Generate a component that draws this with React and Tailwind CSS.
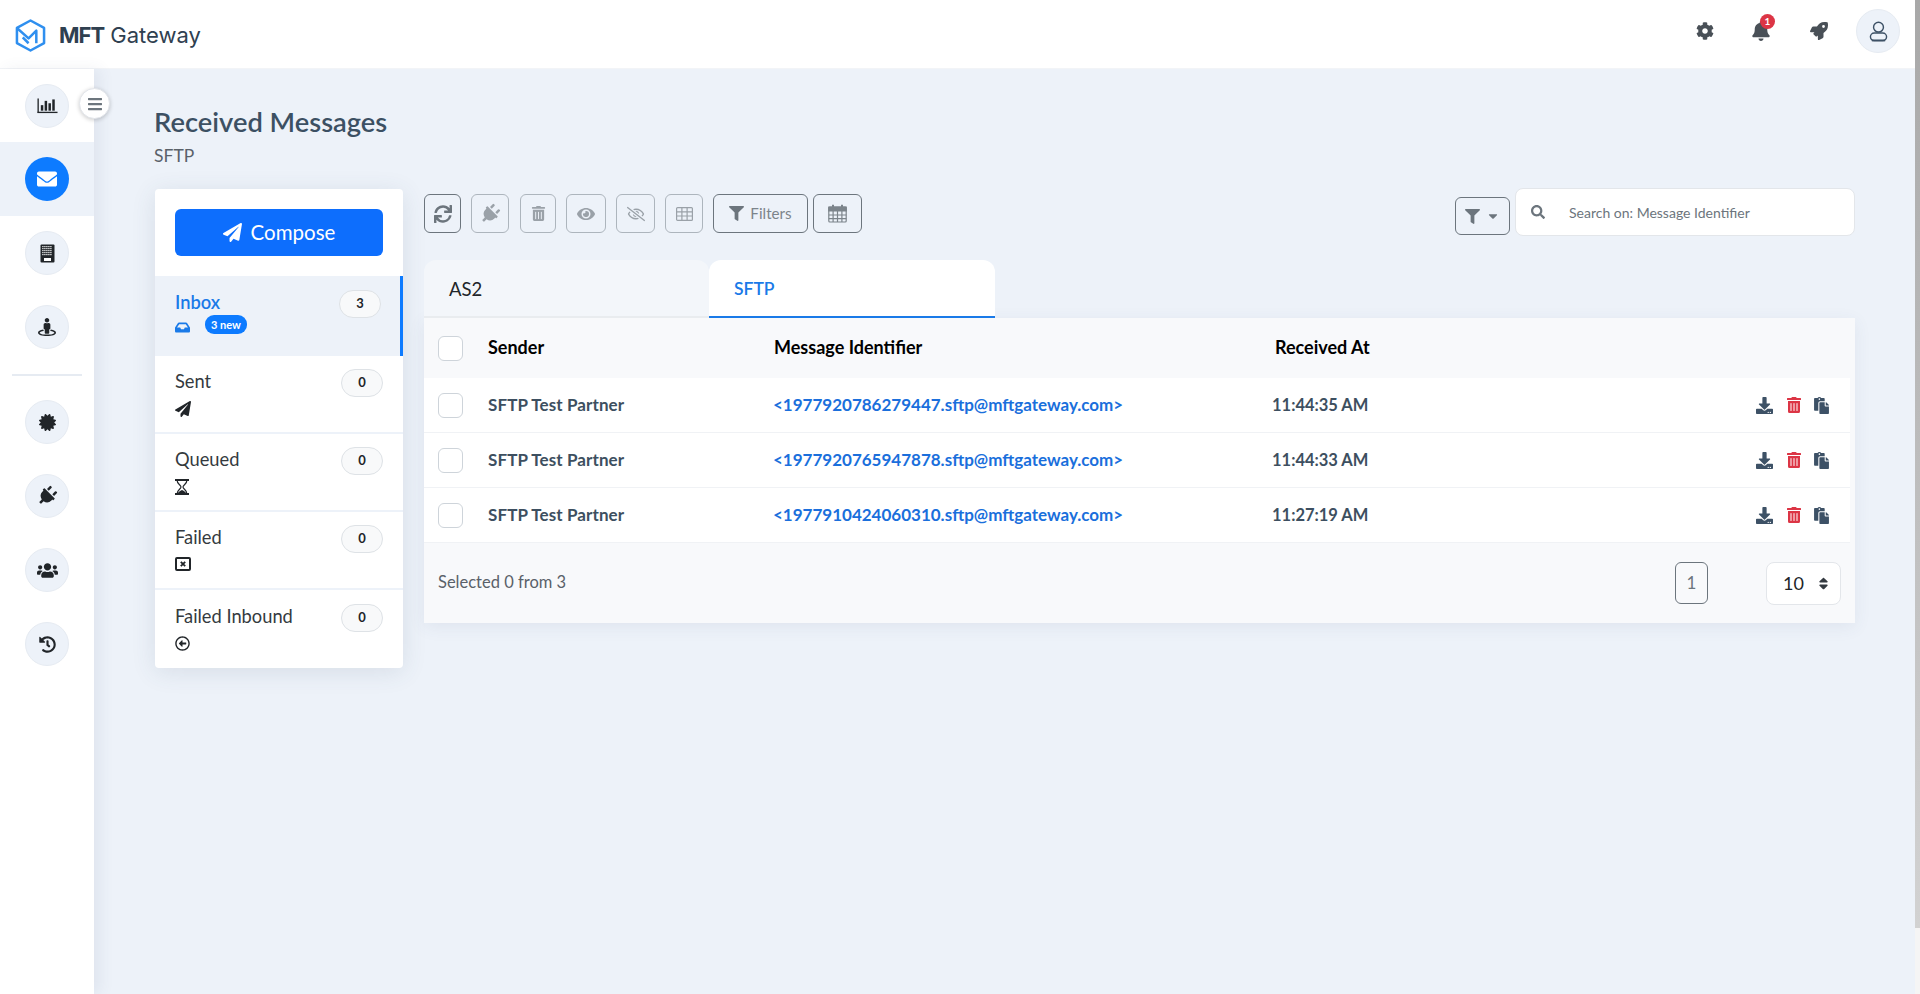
import React from "react";
import {
  FaEnvelope, FaStreetView, FaCertificate, FaPlug, FaUsers, FaHistory,
  FaCog, FaBell, FaRocket, FaPaperPlane, FaInbox,
  FaRegArrowAltCircleLeft, FaSync, FaTrashAlt, FaEye, FaRegEyeSlash, FaFilter,
  FaSearch, FaCaretDown, FaDownload, FaPaste, FaSort, FaBars,
} from "react-icons/fa";

function Logo() {
  return (
    <svg viewBox="0 0 32 34" className="w-[31px] h-[33px]" fill="none" stroke="#2f8fef" strokeWidth="2.6" strokeLinejoin="round">
      <path d="M16 1.5 30 9.2v15.6L16 32.5 2 24.8V9.2Z" />
      <path d="M2 9.2 14 20l8-8v13" />
      <path d="M8 19l6 6" />
    </svg>
  );
}

function ChartIcon({ size = 21 }) {
  return (
    <svg viewBox="0 0 22 16" width={size} height={size * 16 / 22} fill="#212529">
      <rect x="0.5" y="0.5" width="1.4" height="15" />
      <rect x="0.5" y="14.4" width="21" height="1.4" />
      <rect x="4" y="7.5" width="2.6" height="5.8" />
      <rect x="8" y="3" width="2.6" height="10.3" />
      <rect x="12" y="5.5" width="2.6" height="7.8" />
      <rect x="16" y="1.5" width="2.6" height="11.8" />
    </svg>
  );
}

function BuildingIcon() {
  const cells = [];
  for (let r = 0; r < 5; r++) {
    for (let c = 0; c < 5; c++) {
      cells.push(<rect key={r + "-" + c} x={2.3 + c * 2} y={2 + r * 2} width="1.2" height="1.2" fill="#fff" />);
    }
  }
  return (
    <svg viewBox="0 0 15 19" width="15" height="19">
      <rect x="0.5" y="0.5" width="14" height="18" rx="1" fill="#212529" />
      {cells}
      <rect x="4" y="14" width="7" height="3" fill="#fff" />
    </svg>
  );
}

function UserIcon() {
  return (
    <svg viewBox="0 0 20 22" width="19" height="21" fill="none" stroke="#3d5166" strokeWidth="1.5">
      <circle cx="10" cy="6.4" r="5.2" />
      <rect x="1.5" y="12.6" width="17" height="8" rx="4" />
      <path d="M3 20.4h14" strokeWidth="2" />
    </svg>
  );
}

function HourglassIcon() {
  return (
    <svg viewBox="0 0 14 16" width="14" height="16" fill="none" stroke="#212529">
      <path d="M0 1h14M0 15h14" strokeWidth="2" />
      <path d="M2 1c0 4 4 5 4 7s-4 3-4 7M12 1c0 4-4 5-4 7s4 3 4 7" strokeWidth="1.2" />
      <path d="M2.4 15c.4-2 2.6-3 4.6-4 2 1 4.2 2 4.6 4Z" fill="#212529" stroke="none" />
    </svg>
  );
}

function FailedIcon() {
  return (
    <svg viewBox="0 0 16 14" width="16" height="14" fill="none" stroke="#212529">
      <rect x="1" y="1" width="14" height="12" strokeWidth="2" rx="1" />
      <path d="M5.8 4.8l4.4 4.4M10.2 4.8l-4.4 4.4" strokeWidth="1.8" />
    </svg>
  );
}

function GridIcon() {
  return (
    <svg viewBox="0 0 17 14" width="17" height="14" fill="none" stroke="#9aa1a8" strokeWidth="1.2">
      <rect x="0.6" y="0.6" width="15.8" height="12.8" rx="1" />
      <path d="M0.6 4.8h15.8M0.6 9h15.8M5.9 0.6v12.8M11.1 0.6v12.8" />
    </svg>
  );
}

function CalendarIcon() {
  return (
    <svg viewBox="0 0 19 19" width="19" height="19" fill="none" stroke="#7c848b" strokeWidth="1.2">
      <rect x="0.8" y="3" width="17.4" height="15" rx="1" />
      <path d="M0.8 3h17.4v4H0.8Z" fill="#7c848b" />
      <path d="M0.8 11h17.4M0.8 14.6h17.4M5.1 7v11M9.5 7v11M13.9 7v11" />
      <path d="M5 0.8v4M14 0.8v4" strokeWidth="2" />
    </svg>
  );
}

function SideIcon({ icon, active }) {
  return (
    <div className={active ? "h-[74px] flex items-center justify-center bg-[#edf2f9]" : "h-[74px] flex items-center justify-center"}>
      <div className={active
        ? "w-11 h-11 rounded-full bg-[#0d7bff] text-white flex items-center justify-center"
        : "w-11 h-11 rounded-full bg-[#edf2f9] border border-[#e6ebf2] text-[#212529] flex items-center justify-center"}>
        {icon}
      </div>
    </div>
  );
}

function Folder({ label, count, icon, active, badge, last }) {
  return (
    <div className={
      active
        ? "h-[80px] bg-[#edf2f9] border-r-[3px] border-[#0d7bff] pl-5 pr-[19px] pt-[14px] flex justify-between"
        : last
        ? "h-[78px] pl-5 pr-5 pt-[14px] flex justify-between"
        : "h-[78px] border-b-2 border-[#edf2f9] pl-5 pr-5 pt-[13px] flex justify-between"
    }>
      <div>
        <div className={active ? "text-[18.3px] font-semibold leading-6 text-[#1a7ae8]" : "text-[18.3px] leading-6 text-[#343a40]"}>{label}</div>
        <div className={active ? "flex items-center mt-[6px] text-[#1a7ae8]" : "flex items-center mt-[8px] text-[#212529]"}>
          {icon}
          {badge && <span className="ml-[15px] -mt-[7px] h-[19px] px-[6px] rounded-[9px] bg-[#0d7bff] text-white text-[11px] font-bold leading-[19px]">{badge}</span>}
        </div>
      </div>
      <div className="w-[42px] h-[28px] rounded-full bg-[#f8f9fa] border border-[#dee2e6] text-[13px] font-bold text-[#212529] flex items-center justify-center">{count}</div>
    </div>
  );
}

function ToolBtn({ w, children, dark }) {
  return (
    <button className={dark
      ? "h-[39px] rounded-md border border-[#6c757d] flex items-center justify-center text-[#6c757d] shrink-0"
      : "h-[39px] rounded-md border border-[#adb5bd] flex items-center justify-center text-[#9aa1a8] shrink-0"}
      style={{ width: w }}>
      {children}
    </button>
  );
}

function Checkbox() {
  return <div className="w-[25px] h-[25px] rounded-[6px] border border-[#ced4da] bg-white shrink-0" />;
}

const rows = [
  ["<1977920786279447.sftp@mftgateway.com>", "11:44:35 AM"],
  ["<1977920765947878.sftp@mftgateway.com>", "11:44:33 AM"],
  ["<1977910424060310.sftp@mftgateway.com>", "11:27:19 AM"],
];

export default function App() {
  return (
    <div className="font-['Lato',sans-serif] min-h-screen flex bg-[#edf2f9] text-[#212529]">
      <div className="flex-1 min-w-0 flex flex-col">
        <header className="h-[69px] bg-white flex items-center justify-between shrink-0 border-b border-[#f2f4f7]">
          <div className="flex items-center pl-[15px] pt-[2px]">
            <Logo />
            <span className="ml-[13px] text-[22px] leading-none text-[#2f4050] font-['Inter',sans-serif]"><b className="font-bold tracking-[-1px]">MFT</b> Gateway</span>
          </div>
          <div className="flex items-center pr-[15px] pb-[6px]">
            <FaCog size={18} className="text-[#495057]" />
            <div className="relative ml-[37px]">
              <FaBell size={20} className="text-[#495057]" />
              <span className="absolute -top-[7px] left-[9px] w-[15px] h-[15px] rounded-full bg-[#dc3545] text-white text-[10px] font-bold flex items-center justify-center">1</span>
            </div>
            <FaRocket size={18} className="ml-[39px] text-[#495057]" />
            <div className="ml-[28px] w-11 h-11 rounded-full bg-[#edf2f9] border border-[#e6ebf2] flex items-center justify-center">
              <UserIcon />
            </div>
          </div>
        </header>
        <div className="flex-1 flex">
          <aside className="relative w-[94px] bg-white shrink-0 shadow-[6px_0_14px_rgba(60,80,110,0.08)]">
            <div className="h-[73px]"><SideIcon icon={<ChartIcon />} /></div>
            <SideIcon icon={<FaEnvelope size={20} />} active />
            <SideIcon icon={<BuildingIcon />} />
            <SideIcon icon={<FaStreetView size={18} />} />
            <div className="mx-3 mt-[10px] mb-[9px] h-[2px] bg-[#e6ebf2]" />
            <SideIcon icon={<FaCertificate size={17} />} />
            <SideIcon icon={<FaPlug size={20} className="rotate-45" />} />
            <SideIcon icon={<FaUsers size={21} />} />
            <SideIcon icon={<FaHistory size={17} />} />
            <div className="absolute left-[79px] top-[19px] w-[31px] h-[31px] rounded-full bg-white border border-[#e3e6eb] shadow-[0_1px_4px_rgba(0,0,0,0.2)] flex items-center justify-center text-[#6c757d]">
              <FaBars size={16} />
            </div>
          </aside>
          <main className="flex-1 min-w-0 pl-[61px] pr-[60px] pt-[35px]">
            <h1 className="-ml-px text-[27.3px] leading-9 font-semibold text-[#3c5063]">Received Messages</h1>
            <div className="-ml-px mt-[4px] text-[17.5px] leading-6 text-[#5a6169]">SFTP</div>
            <div className="mt-[21px] flex gap-[21px] items-start">
              <div className="w-[248px] shrink-0 bg-white rounded shadow-[0_4px_24px_rgba(60,80,110,0.12)]">
                <div className="h-[87px] px-5 pt-5">
                  <button className="w-full h-[47px] rounded-md bg-[#0d6efd] text-white text-[20.5px] flex items-center justify-center gap-[9px]">
                    <FaPaperPlane size={19} />
                    Compose
                  </button>
                </div>
                <Folder label="Inbox" count="3" icon={<FaInbox size={15} />} active badge="3 new" />
                <Folder label="Sent" count="0" icon={<FaPaperPlane size={16} />} />
                <Folder label="Queued" count="0" icon={<HourglassIcon />} />
                <Folder label="Failed" count="0" icon={<FailedIcon />} />
                <Folder label="Failed Inbound" count="0" icon={<FaRegArrowAltCircleLeft size={15} />} last />
              </div>
              <div className="flex-1 min-w-0">
                <div className="-mt-px h-[48px] mb-6 flex justify-between">
                  <div className="flex gap-[10px] pt-[6px] h-[45px]">
                    <ToolBtn w={37} dark><FaSync size={18} /></ToolBtn>
                    <ToolBtn w={38}><FaPlug size={20} className="rotate-45" /></ToolBtn>
                    <div className="ml-px"><ToolBtn w={36}><FaTrashAlt size={15} /></ToolBtn></div>
                    <ToolBtn w={40}><FaEye size={18} /></ToolBtn>
                    <ToolBtn w={39}><FaRegEyeSlash size={18} /></ToolBtn>
                    <ToolBtn w={38}><GridIcon /></ToolBtn>
                    <ToolBtn w={95} dark><FaFilter size={15} /><span className="ml-[6px] text-[15.2px] text-[#7c848b]">Filters</span></ToolBtn>
                    <div className="-ml-[5px]"><ToolBtn w={49} dark><CalendarIcon /></ToolBtn></div>
                  </div>
                  <div className="flex">
                    <div className="mt-[9px] w-[55px] h-[38px] rounded-md border border-[#6c757d] flex items-center justify-center text-[#6c757d] gap-[6px]">
                      <FaFilter size={15} /><FaCaretDown size={14} />
                    </div>
                    <div className="ml-[5px] w-[340px] h-[48px] rounded-lg bg-white border border-[#e3e6ea] flex items-center pl-[15px] text-[#6c757d]">
                      <FaSearch size={14} />
                      <span className="ml-[24px] text-[14px]">Search on: Message Identifier</span>
                    </div>
                  </div>
                </div>
                <div className="flex h-[58px]">
                  <div className="w-[285px] rounded-t-xl bg-[#f3f6fa] border-b-2 border-[#e9ecef] pl-[25px] pt-[17px] text-[18.5px] leading-6">AS2</div>
                  <div className="w-[286px] rounded-t-xl bg-white border-b-2 border-[#1a7ae8] pl-[25px] pt-[17px] text-[17.5px] leading-6 font-semibold text-[#1a7ae8]">SFTP</div>
                </div>
                <div className="bg-[#f8f9fb] shadow-[0_4px_16px_rgba(60,80,110,0.08)]">
                  <div className="h-[60px] pl-[14px] flex items-center font-bold text-[18px] text-black">
                    <Checkbox />
                    <div className="ml-[25px] w-[286px] -mt-[1px]">Sender</div>
                    <div className="w-[501px] -mt-[1px]">Message Identifier</div>
                    <div className="-mt-[1px]">Received At</div>
                  </div>
                  <div className="mr-[5px] bg-white">
                    {rows.map(([id, t]) => (
                      <div key={id} className="h-[55px] pl-[14px] pr-[20px] flex items-center border-b border-[#f0f2f5] text-[17px] font-bold text-[#3d4f60]">
                        <Checkbox />
                        <div className="ml-[25px] w-[285px] tracking-[0.1px]">SFTP Test Partner</div>
                        <div className="w-[499px] text-[#1a6fdc]">{id}</div>
                        <div className="flex-1 text-[16.5px]">{t}</div>
                        <div className="flex items-center text-[#3d5166]">
                          <FaDownload size={17} />
                          <FaTrashAlt size={16} className="ml-[13px] text-[#dc3545]" />
                          <FaPaste size={17} className="ml-[11px]" />
                        </div>
                      </div>
                    ))}
                  </div>
                  <div className="h-[80px] pl-[14px] pr-[14px] flex items-center justify-between">
                    <div className="text-[16.5px] text-[#5a6169] -mt-[1px]">Selected 0 from 3</div>
                    <div className="flex items-center">
                      <div className="w-[33px] h-[42px] rounded-md border border-[#6c757d] flex items-center justify-center text-[17px] text-[#6c757d]">1</div>
                      <div className="ml-[58px] w-[75px] h-[43px] rounded-lg bg-white border border-[#e3e6ea] flex items-center pl-[16px] text-[18px] gap-[12px]">
                        10 <FaSort size={15} className="text-[#343a40]" />
                      </div>
                    </div>
                  </div>
                </div>
              </div>
            </div>
          </main>
        </div>
      </div>
      <div className="w-[5px] shrink-0 bg-[#f5f5f5]">
        <div className="h-[928px] bg-linear-to-b from-[#a8a8a8] to-[#d2d2d2]" />
      </div>
    </div>
  );
}
